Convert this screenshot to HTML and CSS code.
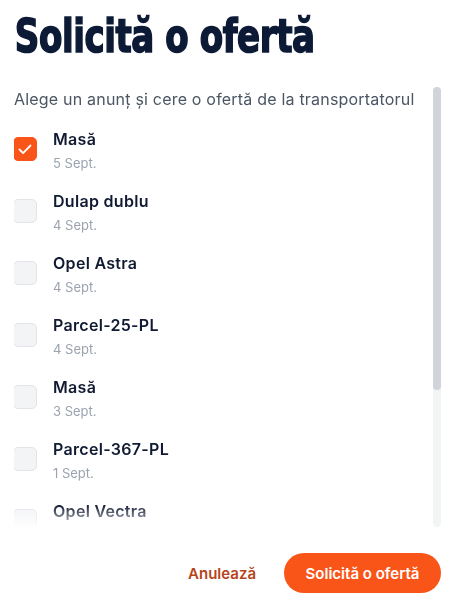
FILE: index.html
```html
<!DOCTYPE html>
<html lang="ro">
<head>
<meta charset="utf-8">
<link rel="stylesheet" href="styles.css">
</head>
<body>
<div class="dialog">
  <h1 class="title"><span class="title-text">Solicită o ofertă</span></h1>
  <div class="scroll-area">
    <div class="scroll-content">
      <p class="subtitle">Alege un anunț și cere o ofertă de la transportatorul</p>
      <ul class="list">
        <li class="row">
          <span class="box checked"><svg viewBox="0 0 24 24" width="24" height="24"><path d="M6.5 12.5l3.6 3.6 7.4-7.6" fill="none" stroke="#fff" stroke-width="1.8" stroke-linecap="round" stroke-linejoin="round"/></svg></span>
          <div class="info"><div class="name">Masă</div><div class="date">5 Sept.</div></div>
        </li>
        <li class="row">
          <span class="box"></span>
          <div class="info"><div class="name">Dulap dublu</div><div class="date">4 Sept.</div></div>
        </li>
        <li class="row">
          <span class="box"></span>
          <div class="info"><div class="name">Opel Astra</div><div class="date">4 Sept.</div></div>
        </li>
        <li class="row">
          <span class="box"></span>
          <div class="info"><div class="name">Parcel-25-PL</div><div class="date">4 Sept.</div></div>
        </li>
        <li class="row">
          <span class="box"></span>
          <div class="info"><div class="name">Masă</div><div class="date">3 Sept.</div></div>
        </li>
        <li class="row">
          <span class="box"></span>
          <div class="info"><div class="name">Parcel-367-PL</div><div class="date">1 Sept.</div></div>
        </li>
        <li class="row">
          <span class="box"></span>
          <div class="info"><div class="name">Opel Vectra</div><div class="date">31 Aug.</div></div>
        </li>
      </ul>
    </div>
    <div class="scroll-track"><div class="scroll-thumb"></div></div>
  </div>
  <div class="footer">
    <button class="btn-cancel">Anulează</button>
    <button class="btn-primary">Solicită o ofertă</button>
  </div>
</div>
</body>
</html>
```
FILE: styles.css
```css
html, body {
  margin: 0;
  padding: 0;
  background: #ffffff;
}
body {
  font-family: Inter, "Noto Sans", sans-serif;
  color: #111a33;
}
.dialog {
  width: 454px;
  height: 612px;
  box-sizing: border-box;
  padding: 0 13px 0 14px;
  display: flex;
  flex-direction: column;
}
.title {
  margin: 8px 0 0 0;
  height: 56px;
  line-height: 56px;
  font-family: "DejaVu Sans Condensed", "DejaVu Sans", sans-serif;
  font-stretch: condensed;
  font-weight: 700;
  font-size: 47px;
  color: #0c1a36;
  white-space: nowrap;
}
.title-text {
  display: inline-block;
  transform: scaleX(0.805);
  transform-origin: left center;
  letter-spacing: -0.5px;
  -webkit-text-stroke: 1.6px #0c1a36;
  padding-left: 1px;
}
.scroll-area {
  margin-top: 23px;
  height: 440px;
  display: flex;
  gap: 14px;
}
.scroll-content {
  flex: 1;
  overflow: hidden;
  padding-top: 2px;
  -webkit-mask-image: linear-gradient(to bottom, #000 0, #000 418px, rgba(0,0,0,0.15) 440px);
  mask-image: linear-gradient(to bottom, #000 0, #000 418px, rgba(0,0,0,0.15) 440px);
}
.subtitle {
  margin: 0;
  font-size: 16px;
  line-height: 20px;
  letter-spacing: 0.2px;
  color: #4b5563;
  white-space: nowrap;
}
.list {
  list-style: none;
  margin: 20px 0 0 0;
  padding: 0;
  display: flex;
  flex-direction: column;
  gap: 20px;
}
.row {
  display: flex;
  align-items: center;
  gap: 16px;
  height: 42px;
}
.box {
  width: 24px;
  height: 24px;
  box-sizing: border-box;
  border-radius: 5px;
  background: #f3f4f6;
  border: 1px solid #e2e4e8;
  flex: none;
  margin-left: -1px;
  margin-top: -2px;
  display: flex;
}
.box.checked {
  background: #fa5519;
  border-color: #fa5519;
}
.box svg {
  margin: -1px;
}
.info {
  display: flex;
  flex-direction: column;
  gap: 6px;
}
.name {
  font-size: 16px;
  line-height: 20px;
  font-weight: 600;
  letter-spacing: 0.3px;
  color: #111a33;
}
.date {
  font-size: 13px;
  line-height: 16px;
  color: #9ca3af;
}
.scroll-track {
  width: 8px;
  height: 440px;
  border-radius: 4px;
  background: #f3f4f6;
  flex: none;
}
.scroll-thumb {
  width: 8px;
  height: 303px;
  border-radius: 4px;
  background: #d1d5db;
}
.footer {
  margin-top: 26px;
  display: flex;
  justify-content: flex-end;
  align-items: center;
  gap: 28px;
}
.btn-cancel {
  border: none;
  background: none;
  padding: 0;
  font-family: Inter, sans-serif;
  font-size: 15px;
  font-weight: 600;
  color: #b5451b;
}
.btn-primary {
  border: none;
  width: 157px;
  height: 40px;
  border-radius: 20px;
  background: #fa5519;
  color: #ffffff;
  font-family: Inter, sans-serif;
  font-size: 15px;
  font-weight: 600;
  padding: 0;
}
```
